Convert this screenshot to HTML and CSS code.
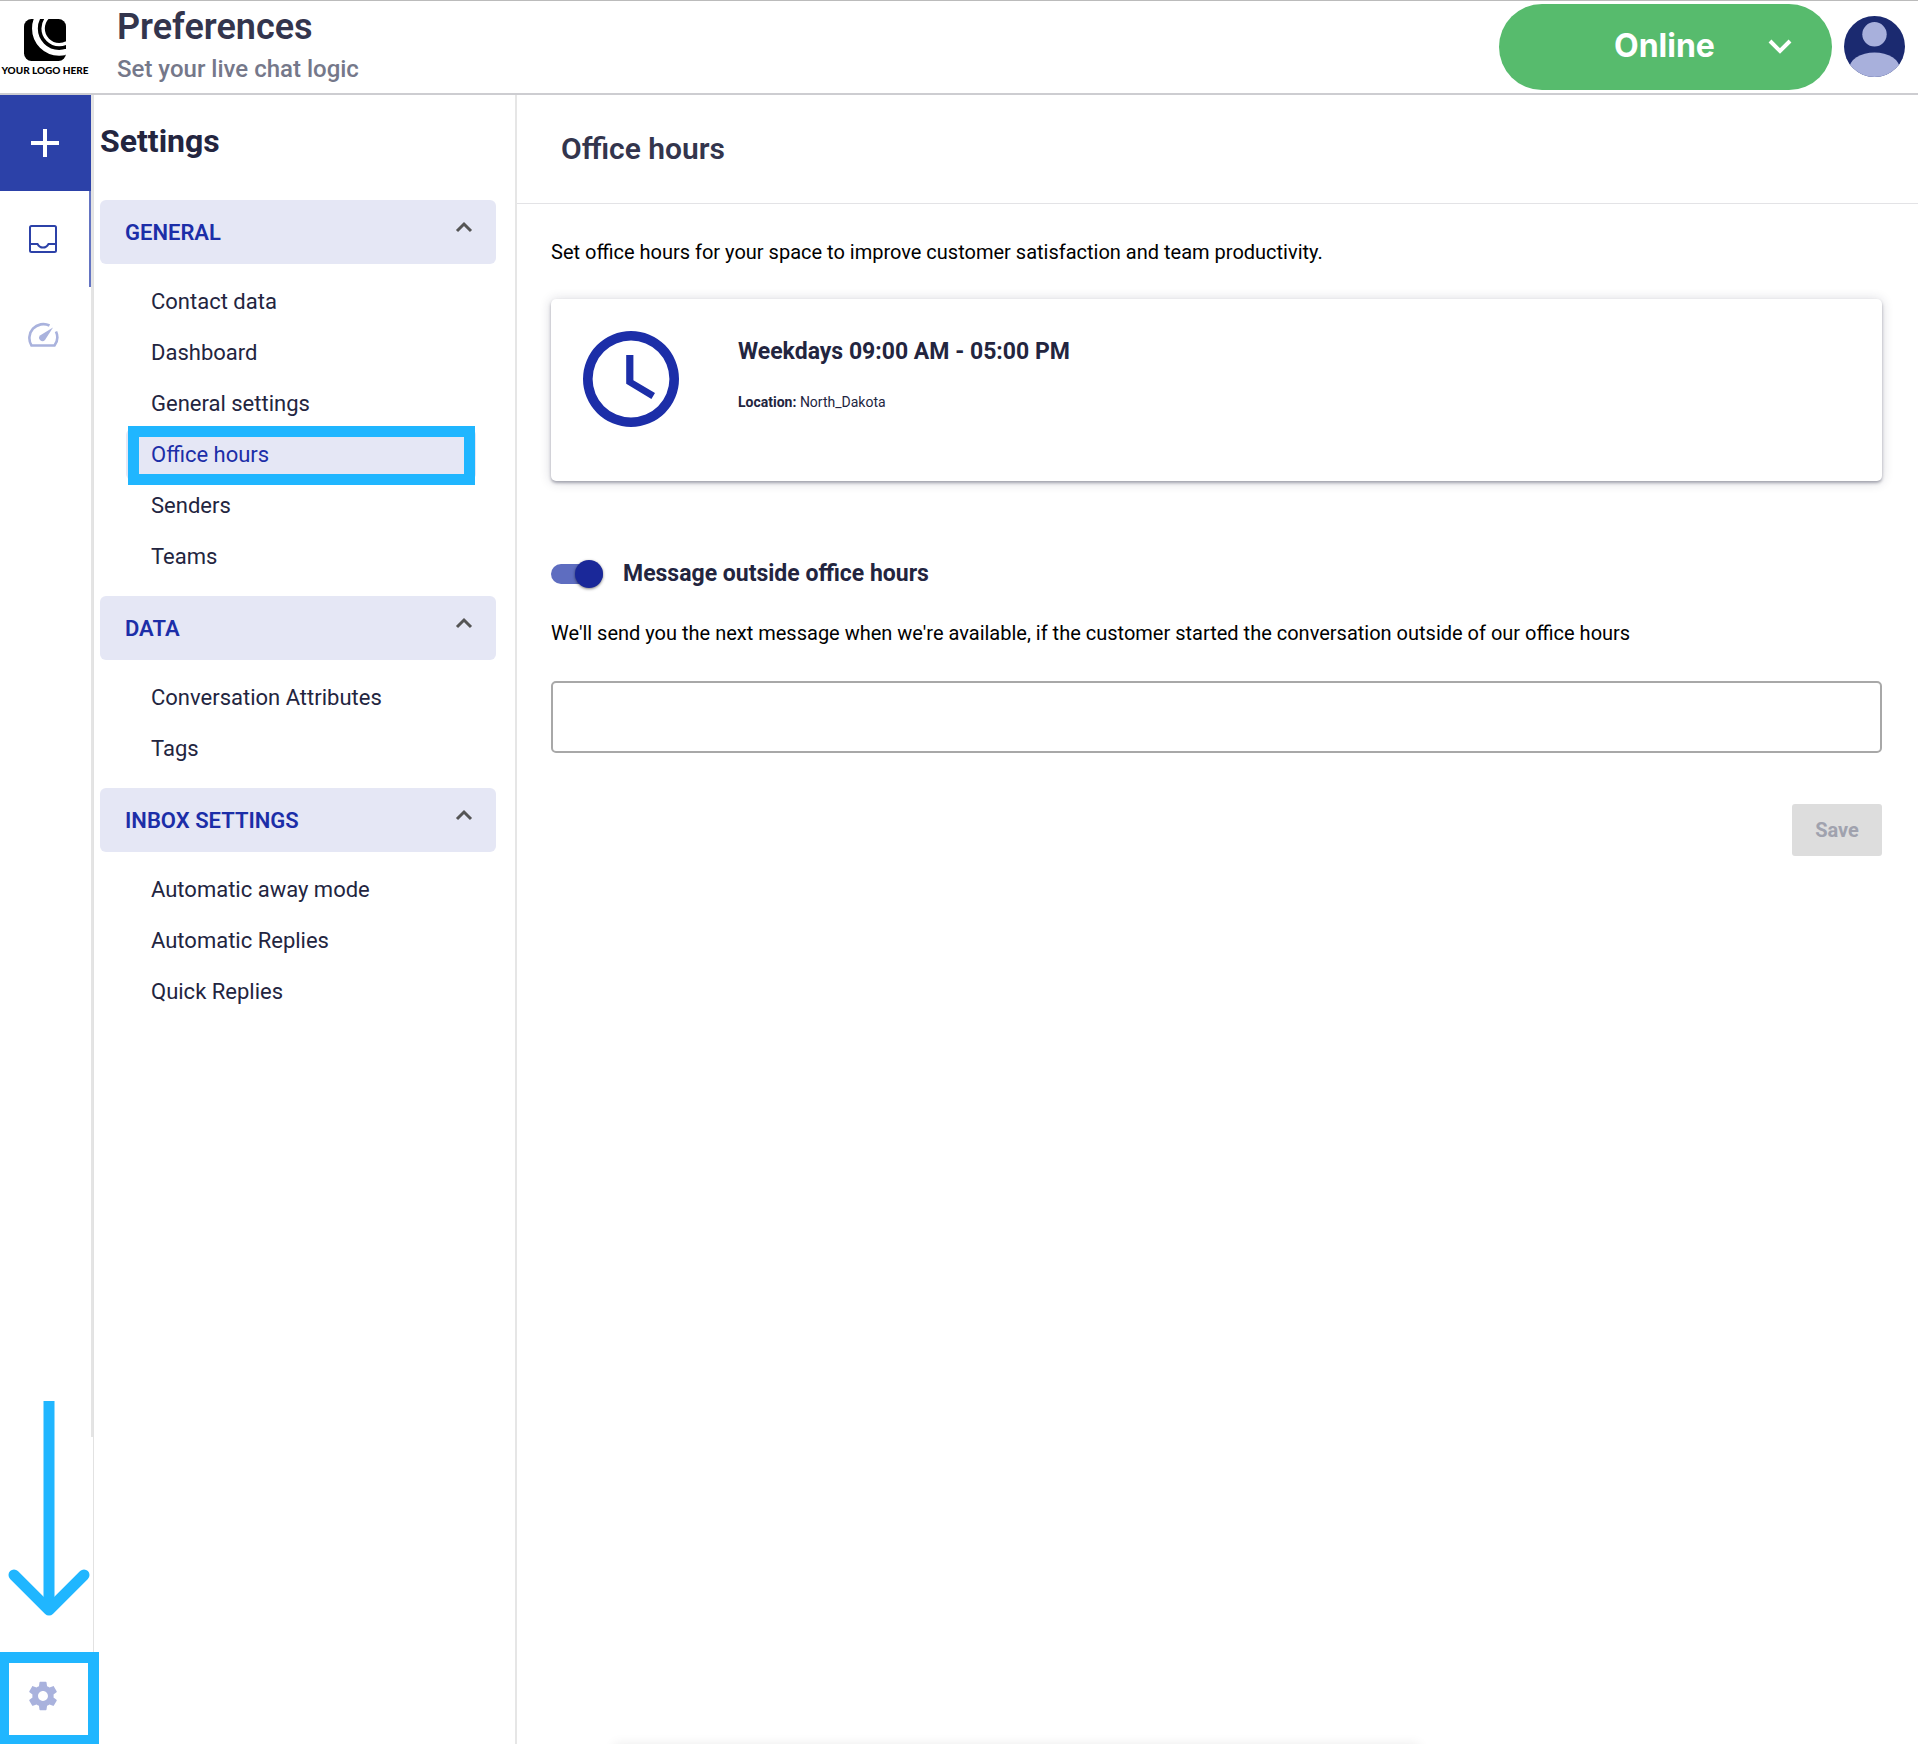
FILE: index.html
```html
<!DOCTYPE html>
<html lang="en">
<head>
    <meta charset="UTF-8">
    <title>Preferences</title>
    <link rel="stylesheet" href="styles.css">
</head>
<body>
    <header class="topbar">
        <a class="logo" href="#">
            <svg class="logo-mark" viewBox="0 0 123 123" aria-hidden="true">
                <clipPath id="logoClip"><rect width="123" height="123" rx="22"/></clipPath>
                <g clip-path="url(#logoClip)">
                    <rect width="123" height="123" fill="#000"/>
                    <circle cx="103" cy="28" r="71" fill="none" stroke="#fff" stroke-width="17"/>
                    <circle cx="103" cy="28" r="47" fill="none" stroke="#fff" stroke-width="10"/>
                </g>
            </svg>
            <span class="logo-text">YOUR LOGO HERE</span>
        </a>
        <div class="heading">
            <h1>Preferences</h1>
            <p>Set your live chat logic</p>
        </div>
        <button class="status" type="button">
            <span>Online</span>
            <svg class="status-arrow" viewBox="0 0 24 16" aria-hidden="true"><path d="M2 3l10 10L22 3" fill="none" stroke="#fff" stroke-width="4"/></svg>
        </button>
        <button class="avatar" type="button" aria-label="Account">
            <svg viewBox="0 0 60 60" aria-hidden="true">
                <clipPath id="avatarClip"><circle cx="30" cy="30" r="30"/></clipPath>
                <g clip-path="url(#avatarClip)">
                    <rect width="60" height="60" fill="#1b2a70"/>
                    <circle cx="30" cy="18" r="12" fill="#a8b0dc"/>
                    <ellipse cx="30" cy="52" rx="25" ry="16" fill="#a8b0dc"/>
                </g>
            </svg>
        </button>
    </header>

    <div class="layout">
        <div class="rail">
            <nav class="rail-nav">
                <button class="rail-item add" type="button" aria-label="New">
                    <svg width="28" height="28" viewBox="0 0 28 28"><path d="M14 0v28M0 14h28" stroke="#fff" stroke-width="4"/></svg>
                </button>
                <a class="rail-item active" href="#" aria-label="Inbox">
                    <svg width="28" height="28" viewBox="0 0 28 28" fill="none" stroke="#2c41a8" stroke-width="2"><rect x="1" y="1" width="26" height="26" rx="1.5"/><path d="M1 19h7.500c1.500 3 3.500 3.600 5.500 3.600s4-.6 5.500-3.600H27"/></svg>
                </a>
                <a class="rail-item" href="#" aria-label="Statistics">
                    <svg width="32" height="26" viewBox="0 0 32 26"><path d="M22.500 3.500A14 14 0 0 0 4.500 23.500h23a14 14 0 0 0 1.500-14" fill="none" stroke="#a9b2dd" stroke-width="2.600"/><path d="M26 5.500l-8 12.500a3.200 3.200 0 1 1-5-4.500z" fill="#a9b2dd"/></svg>
                </a>
            </nav>
            <div class="rail-footer">
                <svg class="arrow" width="82" height="216" viewBox="0 0 82 216" fill="none" stroke="#20b6ff" stroke-width="11" aria-hidden="true"><path d="M41 0v204"/><path d="M6 174l35 35 35-35" stroke-linecap="round" stroke-linejoin="round"/></svg>
                <a class="rail-item marked" href="#" aria-label="Preferences">
                    <svg width="34" height="34" viewBox="0 0 24 24"><path fill="#a9b2dd" d="M19.430 12.980c.04-.32.07-.64.07-.98s-.03-.66-.07-.98l2.110-1.650c.19-.15.24-.42.12-.64l-2-3.460c-.12-.22-.39-.3-.61-.22l-2.490 1c-.52-.4-1.080-.73-1.690-.98l-.38-2.650C14.460 2.180 14.250 2 14 2h-4c-.25 0-.46.18-.49.42l-.38 2.650c-.61.25-1.170.59-1.690.98l-2.490-1c-.23-.09-.49 0-.61.22l-2 3.460c-.13.22-.07.49.12.64l2.110 1.650c-.04.32-.07.65-.07.98s.03.66.07.98l-2.110 1.650c-.19.15-.24.42-.12.64l2 3.460c.12.22.39.3.61.22l2.490-1c.52.4 1.080.73 1.690.98l.38 2.650c.03.24.24.42.49.42h4c.25 0 .46-.18.49-.42l.38-2.650c.61-.25 1.170-.59 1.690-.98l2.490 1c.23.09.49 0 .61-.22l2-3.460c.12-.22.07-.49-.12-.64l-2.110-1.650zM12 15.500c-1.930 0-3.500-1.570-3.500-3.500s1.570-3.500 3.500-3.500 3.500 1.570 3.500 3.500-1.570 3.500-3.500 3.500z"/></svg>
                </a>
            </div>
        </div>

        <aside class="sidebar">
            <h2>Settings</h2>
            <section>
                <button class="group" type="button">GENERAL <svg class="chevron" viewBox="0 0 18 12"><path d="M2 10l7-7 7 7"/></svg></button>
                <ul>
                    <li><a href="#">Contact data</a></li>
                    <li><a href="#">Dashboard</a></li>
                    <li><a href="#">General settings</a></li>
                    <li><a class="selected" href="#">Office hours</a></li>
                    <li><a href="#">Senders</a></li>
                    <li><a href="#">Teams</a></li>
                </ul>
            </section>
            <section>
                <button class="group" type="button">DATA <svg class="chevron" viewBox="0 0 18 12"><path d="M2 10l7-7 7 7"/></svg></button>
                <ul>
                    <li><a href="#">Conversation Attributes</a></li>
                    <li><a href="#">Tags</a></li>
                </ul>
            </section>
            <section>
                <button class="group" type="button">INBOX SETTINGS <svg class="chevron" viewBox="0 0 18 12"><path d="M2 10l7-7 7 7"/></svg></button>
                <ul>
                    <li><a href="#">Automatic away mode</a></li>
                    <li><a href="#">Automatic Replies</a></li>
                    <li><a href="#">Quick Replies</a></li>
                </ul>
            </section>
        </aside>

        <main class="main">
            <h2 class="title">Office hours</h2>
            <form class="content">
                <p class="text">Set office hours for your space to improve customer satisfaction and team productivity.</p>
                <div class="card">
                    <svg class="clock" viewBox="0 0 20 20" fill="#1c2ea8" aria-hidden="true"><path d="M10 0a10 10 0 1 0 0 20 10 10 0 0 0 0-20zm0 18a8 8 0 1 1 0-16 8 8 0 0 1 0 16z"/><path d="M10.500 5H9v6l5.250 3.150.75-1.230-4.500-2.670z"/></svg>
                    <div>
                        <h3>Weekdays 09:00 AM - 05:00 PM</h3>
                        <p class="location"><b>Location:</b> North_Dakota</p>
                    </div>
                </div>
                <div class="switch-row">
                    <input class="switch" type="checkbox" id="outside" checked>
                    <label for="outside">Message outside office hours</label>
                </div>
                <label class="text" for="message">We'll send you the next message when we're available, if the customer started the conversation outside of our office hours</label>
                <input class="message" type="text" id="message">
                <button class="save" type="submit" disabled>Save</button>
            </form>
        </main>
    </div>
    <div class="drawer"></div>
</body>
</html>
```

FILE: styles.css
```css
* {
    box-sizing: border-box;
}

body {
    margin: 0;
    min-height: 100vh;
    display: flex;
    flex-direction: column;
    overflow-x: hidden;
    font-family: Roboto, sans-serif;
    color: #23253f;
    background: #fff;
}

h1, h2, h3, p, ul {
    margin: 0;
    padding: 0;
}

a {
    color: inherit;
    text-decoration: none;
}

button {
    border: none;
    padding: 0;
    font-family: inherit;
    cursor: pointer;
}

/* top bar */
.topbar {
    display: flex;
    align-items: center;
    height: 95px;
    padding-right: 13px;
    border-top: 1px solid #bbb;
    border-bottom: 2px solid #cdcdd1;
}

.logo {
    width: 90px;
    display: flex;
    flex-direction: column;
    align-items: center;
    gap: 3px;
    color: #000;
}

.logo-mark {
    width: 42px;
    height: 42px;
}

.logo-text {
    font: 900 10px/12px Lato, sans-serif;
    white-space: nowrap;
}

.heading {
    flex: 1;
    padding-left: 27px;
}

.heading h1 {
    font-size: 36px;
    line-height: 44px;
    font-weight: 600;
    color: #33354d;
}

.heading p {
    font-size: 24px;
    line-height: 40px;
    font-weight: 500;
    color: #75788a;
}

.status {
    width: 333px;
    height: 86px;
    margin-right: 12px;
    padding: 0 40px 2px 115px;
    display: flex;
    align-items: center;
    justify-content: space-between;
    border-radius: 43px;
    background: #57bb6d;
    color: #fff;
    font: 700 32px/40px Inter, sans-serif;
}

.status-arrow {
    width: 24px;
    height: 16px;
}

.avatar {
    width: 61px;
    height: 61px;
    margin-bottom: 2px;
    background: none;
}

.avatar svg {
    display: block;
}

/* icon rail */
.layout {
    flex: 1;
    display: flex;
}

.rail {
    width: 93px;
    display: flex;
    flex-direction: column;
}

.rail-nav {
    flex: 1;
    border-right: 2px solid #e4e4e4;
}

.rail-item {
    flex-shrink: 0;
    width: 91px;
    height: 96px;
    padding-right: 6px;
    display: flex;
    align-items: center;
    justify-content: center;
}

.add {
    padding-right: 2px;
    background: #2c41a8;
}

.active {
    padding-right: 4px;
    border-right: 2px solid #6474c2;
}

.rail-footer {
    height: 307px;
    display: flex;
    flex-direction: column;
    justify-content: flex-end;
}

.arrow {
    flex-shrink: 0;
    margin: 0 0 31px 8px;
}

.marked {
    position: relative;
}

.marked::after {
    content: "";
    position: absolute;
    inset: 4px -8px -2px -2px;
    border: 11px solid #20b6ff;
}

/* settings menu */
.sidebar {
    width: 424px;
    padding: 0 19px 0 6px;
    border-left: 1px solid #e2e2e2;
    border-right: 2px solid #e6e6e6;
}

.sidebar h2 {
    padding: 26px 0 39px;
    font-size: 32px;
    line-height: 40px;
    font-weight: 700;
}

.group {
    width: 100%;
    height: 64px;
    padding: 0 23px 0 25px;
    display: flex;
    align-items: center;
    justify-content: space-between;
    border-radius: 6px;
    background: #e5e7f5;
    color: #1c2ea8;
    font-size: 22px;
    font-weight: 600;
}

.chevron {
    width: 18px;
    height: 12px;
    margin-bottom: 11px;
    fill: none;
    stroke: #555;
    stroke-width: 3;
}

.sidebar ul {
    padding: 12px 20px 14px 26px;
    list-style: none;
}

.sidebar li a {
    display: block;
    padding-left: 25px;
    border-radius: 6px;
    font-size: 22px;
    line-height: 51px;
}

.sidebar .selected {
    position: relative;
    background: #e5e7f5;
    color: #1c2ea8;
}

.selected::after {
    content: "";
    position: absolute;
    inset: -3px 1px -5px 2px;
    border: 11px solid #20b6ff;
}

/* page content */
.main {
    flex: 1;
    min-width: 0;
}

.title {
    padding: 33px 44px 34px;
    border-bottom: 1px solid #e3e3e6;
    font-size: 30px;
    line-height: 41px;
    font-weight: 600;
    color: #33354d;
}

.content {
    display: flex;
    flex-direction: column;
    padding: 32px 36px 32px 34px;
}

.text {
    font-size: 20px;
    line-height: 32px;
    color: #000;
}

.card {
    height: 182px;
    margin: 31px 0 77px;
    padding: 32px;
    display: flex;
    gap: 59px;
    border-radius: 5px;
    box-shadow: 0 2px 3px rgba(35, 37, 63, 0.35), 0 1px 12px rgba(35, 37, 63, 0.2);
}

.clock {
    width: 96px;
    height: 96px;
}

.card h3 {
    padding-top: 5px;
    font-size: 23px;
    line-height: 32px;
    font-weight: 700;
}

.location {
    padding-top: 24px;
    font-size: 14px;
    line-height: 20px;
}

.switch-row {
    display: flex;
    align-items: center;
    gap: 20px;
    margin-bottom: 27px;
    font-size: 23px;
    line-height: 32px;
    font-weight: 700;
}

.switch {
    appearance: none;
    position: relative;
    width: 52px;
    height: 20px;
    margin: 0;
    border-radius: 10px;
    background: #5e6dc0;
}

.switch::after {
    content: "";
    position: absolute;
    top: -4px;
    right: 0;
    width: 28px;
    height: 28px;
    border-radius: 50%;
    background: #1a2899;
    box-shadow: 0 1px 3px rgba(0, 0, 0, 0.5);
}

.message {
    height: 72px;
    margin: 32px 0 51px;
    padding: 0 20px;
    border: 2px solid #a8a8a8;
    border-radius: 5px;
    font: 20px Roboto, sans-serif;
}

.save {
    align-self: flex-end;
    width: 90px;
    height: 52px;
    border-radius: 3px;
    background: #ddd;
    color: #a0a2ae;
    font-size: 20px;
    font-weight: 700;
}

/* closed drawer, only its shadow shows above the window edge */
.drawer {
    position: fixed;
    left: 32%;
    right: 26%;
    top: 100%;
    height: 20px;
    box-shadow: 0 0 12px rgba(0, 0, 0, 0.08);
}
```
